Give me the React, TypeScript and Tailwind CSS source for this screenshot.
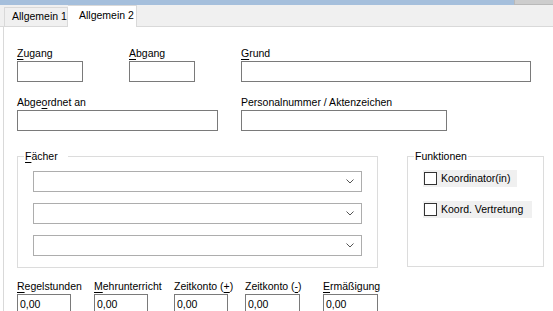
import React from "react";

function Label({ pre = "", u, post = "" }: { pre?: string; u: string; post?: string }) {
	return (
		<div className="h-[13px] leading-[13px] whitespace-nowrap">
			{pre}
			<span className="underline underline-offset-[2px]">{u}</span>
			{post}
		</div>
	);
}

function Field({ w, value }: { w: string; value?: string }) {
	return (
		<div className={`${w} mt-[1px] h-[21px] border border-[#7a7a7a] bg-white pl-[2px] leading-[19px]`}>{value}</div>
	);
}

function Combo() {
	return (
		<div className="flex h-[21px] w-[329px] items-center justify-end border border-[#adadad] bg-white pr-[7px]">
			<svg width="8" height="5" viewBox="0 0 8 5">
				<path d="M0.5 0.5 L4 4 L7.5 0.5" fill="none" stroke="#555" strokeWidth="1" />
			</svg>
		</div>
	);
}

function Check({ label, w }: { label: string; w: string }) {
	return (
		<div className={`${w} flex h-[17px] items-center bg-[#f0f0f0]`}>
			<div className="ml-px h-[13px] w-[13px] border border-[#333] bg-white" />
			<span className="ml-[4px] whitespace-nowrap">{label}</span>
		</div>
	);
}

export default function App() {
	return (
		<div className="flex h-[311px] w-[553px] flex-col overflow-hidden bg-white font-['Liberation_Sans',Arial,sans-serif] text-[10.5px] text-black">
			{/* window title */}
			<div className="flex h-[11px] justify-end bg-[#a5bfdc]">
				<div className="h-[5px] w-[39px] border-b border-l border-[#b9b9b9] bg-[#cdcdcd]" />
			</div>
			<div className="h-px bg-[#8f8f8f]" />

			{/* tabs */}
			<div className="flex h-[22px] items-end border-b border-[#d9d9d9] bg-[#f0f0f0] pl-[4px]">
				<div className="flex h-[19px] w-[64px] items-center border border-b-0 border-[#d9d9d9] bg-[#f0f0f0] pl-[7px]">
					Allgemein 1
				</div>
				<div className="relative z-10 -mb-px flex h-[22px] w-[69px] items-start border border-b-0 border-l-0 border-[#d9d9d9] bg-white pl-[11px] pt-[2px]">
					Allgemein 2
				</div>
			</div>

			{/* page */}
			<div className="ml-[3px] flex flex-1 flex-col border-l border-[#d9d9d9] pl-[13px] pt-[20px]">
				<div className="flex">
					<div className="w-[112px]">
						<Label u="Z" post="ugang" />
						<Field w="w-[66px]" />
					</div>
					<div className="w-[112px]">
						<Label u="A" post="bgang" />
						<Field w="w-[66px]" />
					</div>
					<div>
						<Label u="G" post="rund" />
						<Field w="w-[290px]" />
					</div>
				</div>

				<div className="mt-[14px] flex">
					<div className="w-[224px]">
						<Label pre="Abge" u="o" post="rdnet an" />
						<Field w="w-[201px]" />
					</div>
					<div>
						<Label pre="Personalnummer / Aktenzeichen" u="" />
						<Field w="w-[206px]" />
					</div>
				</div>

				<div className="mt-[19px] flex">
					<fieldset className="h-[118px] w-[361px] border border-[#dcdcdc] pl-[15px]">
						<legend className="-ml-[9px] h-[13px] pl-px pr-[10px] leading-[13px]">
							<span className="underline underline-offset-[2px]">F</span>ächer
						</legend>
						<div className="mt-[8px] flex flex-col gap-[11px]">
							<Combo />
							<Combo />
							<Combo />
						</div>
					</fieldset>
					<fieldset className="ml-[29px] h-[117px] w-[137px] border border-[#dcdcdc] pl-[15px]">
						<legend className="-ml-[9px] h-[13px] px-px leading-[13px]">Funktionen</legend>
						<div className="mt-[7px] flex flex-col gap-[14px]">
							<Check label="Koordinator(in)" w="w-[94px]" />
							<Check label="Koord. Vertretung" w="w-[109px]" />
						</div>
					</fieldset>
				</div>

				<div className="mt-[12px] flex">
					<div className="w-[77px]">
						<Label u="R" post="egelstunden" />
						<Field w="w-[54px]" value="0,00" />
					</div>
					<div className="w-[80px]">
						<Label u="M" post="ehrunterricht" />
						<Field w="w-[54px]" value="0,00" />
					</div>
					<div className="w-[71px]">
						<Label pre="Zeitkonto (" u="+" post=")" />
						<Field w="w-[54px]" value="0,00" />
					</div>
					<div className="w-[78px]">
						<Label pre="Zeitkonto (" u="-" post=")" />
						<Field w="w-[55px]" value="0,00" />
					</div>
					<div>
						<Label u="E" post="rmäßigung" />
						<Field w="w-[55px]" value="0,00" />
					</div>
				</div>
			</div>
		</div>
	);
}
